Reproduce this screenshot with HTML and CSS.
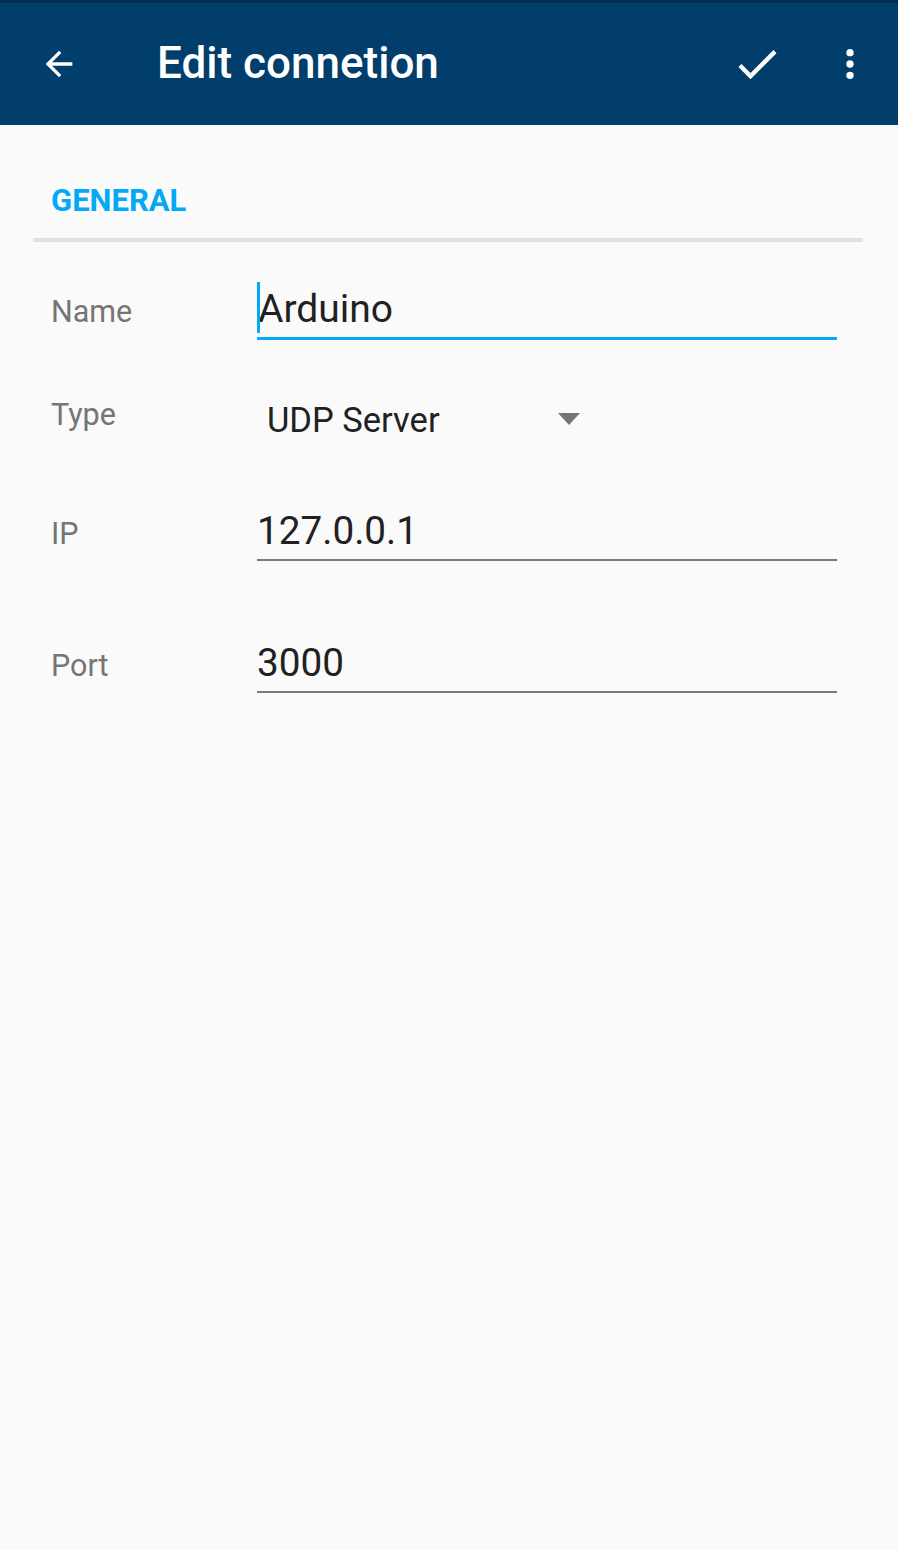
FILE: index.html
```html
<!DOCTYPE html>
<html>
<head>
<meta charset="utf-8">
<link rel="stylesheet" href="styles.css">
</head>
<body>
<header class="appbar">
  <button class="icon-btn back" aria-label="Back">
    <svg width="40" height="40" viewBox="0 0 24 24"><path d="M20 11H7.83l5.59-5.59L12 4l-8 8 8 8 1.41-1.41L7.83 13H20v-2z" fill="#fff"/></svg>
  </button>
  <h1 class="title">Edit connetion</h1>
  <div class="actions">
    <button class="icon-btn check" aria-label="Save">
      <svg width="52" height="52" viewBox="0 0 24 24"><path d="M9 16.17L4.83 12l-1.42 1.41L9 19 21 7l-1.41-1.41z" fill="#fff"/></svg>
    </button>
    <button class="icon-btn more" aria-label="More">
      <svg width="40" height="40" viewBox="0 0 24 24"><circle cx="12" cy="5.2" r="2.2" fill="#fff"/><circle cx="12" cy="12" r="2.2" fill="#fff"/><circle cx="12" cy="18.8" r="2.2" fill="#fff"/></svg>
    </button>
  </div>
</header>
<main class="content">
  <div class="section-head">GENERAL</div>
  <div class="divider"></div>
  <div class="row row-name">
    <div class="label">Name</div>
    <div class="field field-focus"><span class="cursor"></span>Arduino</div>
  </div>
  <div class="row row-type">
    <div class="label">Type</div>
    <div class="spinner"><span class="spinner-text">UDP Server</span><span class="caret"></span></div>
  </div>
  <div class="row row-ip">
    <div class="label">IP</div>
    <div class="field field-num">127.0.0.1</div>
  </div>
  <div class="row row-port">
    <div class="label">Port</div>
    <div class="field field-num">3000</div>
  </div>
</main>
</body>
</html>
```
FILE: styles.css
```css
* { box-sizing: border-box; }
html, body { margin: 0; padding: 0; }
body {
  background: #fafafa;
  font-family: Roboto, "Noto Sans", "Liberation Sans", sans-serif;
  width: 898px;
  height: 1550px;
  overflow: hidden;
}
.appbar {
  height: 125px;
  background: #013e6b;
  border-top: 3px solid #012d50;
  display: flex;
  align-items: center;
  padding: 0 0 0 39px;
}
.icon-btn {
  background: none;
  border: 0;
  padding: 0;
  margin: 0;
  display: flex;
  align-items: center;
  justify-content: center;
  cursor: pointer;
}
.back { width: 40px; height: 40px; }
.title {
  margin: 0 0 0 78px;
  font-size: 44px;
  font-weight: 500;
  color: #fff;
  letter-spacing: 0;
  flex: 1;
  line-height: 1;
  padding-bottom: 2px;
}
.actions { display: flex; align-items: center; }
.check { width: 52px; height: 52px; margin-right: 47px; }
.more { width: 40px; height: 40px; margin-right: 28px; }

.content { padding: 0; }
.section-head {
  padding: 58px 0 0 51px;
  font-size: 31px;
  font-weight: 700;
  color: #03a9f4;
  line-height: 36px;
  height: 113px;
  letter-spacing: 0;
}
.divider {
  margin: 0 35px 0 33px;
  height: 4px;
  background: #e0e0e0;
}
.row {
  display: flex;
  align-items: baseline;
}
.label {
  width: 257px;
  padding-left: 51px;
  font-size: 30.5px;
  line-height: 34px;
  color: #757575;
  flex: none;
}
.field {
  width: 580px;
  line-height: 44px;
  color: #212121;
  padding-bottom: 6px;
  border-bottom: 2px solid #7a7a7a;
  position: relative;
}
.field-focus {
  font-size: 39px;
  border-bottom: 3px solid #03a9f4;
  padding-left: 1px;
  padding-bottom: 6px;
}
.cursor {
  position: absolute;
  left: 0;
  top: -5px;
  width: 3px;
  height: 51px;
  background: #03a9f4;
}
.field-num { font-size: 38.7px; }
.row-name { margin-top: 45px; }
.row-type { margin-top: 58px; align-items: center; }
.row-type .label { padding-bottom: 10px; }
.spinner {
  width: 330px;
  display: flex;
  align-items: center;
  padding-left: 10px;
  line-height: 44px;
}
.spinner-text {
  font-size: 34.5px;
  color: #212121;
  flex: 1;
}
.caret {
  width: 0;
  height: 0;
  border-left: 11px solid transparent;
  border-right: 11px solid transparent;
  border-top: 12px solid #757575;
  margin-right: 7px;
  margin-top: -2px;
}
.row-ip { margin-top: 67px; }
.row-port { margin-top: 80px; }
```
